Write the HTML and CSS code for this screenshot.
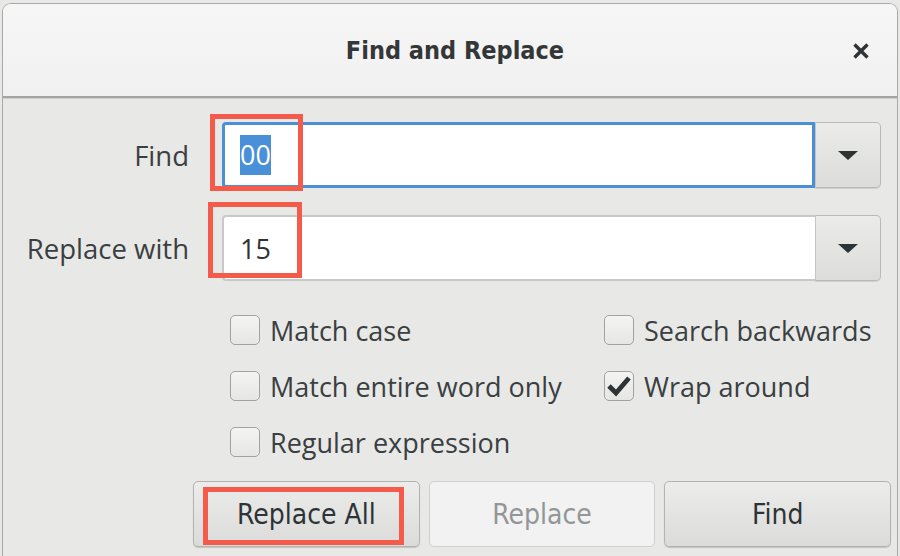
FILE: index.html
```html
<!DOCTYPE html>
<html>
<head>
<meta charset="utf-8">
<link rel="stylesheet" href="styles.css">
</head>
<body>
<div class="window">
  <header class="titlebar">
    <span class="title">Find and Replace</span>
    <button class="close" aria-label="Close">
      <svg width="18" height="16" viewBox="0 0 18 16"><path d="M2.5 1.5 L15.5 14.5 M15.5 1.5 L2.5 14.5" stroke="#2e3436" stroke-width="3.4" stroke-linecap="butt"/></svg>
    </button>
  </header>
  <main class="content">
    <div class="form">
      <label class="label">Find</label>
      <div class="combo">
        <div class="entry focused"><span class="sel">00</span></div>
        <div class="drop"><svg width="20" height="9" viewBox="0 0 20 9"><path d="M0 0 H20 L10 9 Z" fill="#2e3436"/></svg></div>
      </div>
      <label class="label">Replace with</label>
      <div class="combo">
        <div class="entry"><span class="val">15</span></div>
        <div class="drop"><svg width="20" height="9" viewBox="0 0 20 9"><path d="M0 0 H20 L10 9 Z" fill="#2e3436"/></svg></div>
      </div>
    </div>
    <div class="options">
      <div class="opt"><span class="box"></span><span>Match case</span></div>
      <div class="opt"><span class="box"></span><span>Search backwards</span></div>
      <div class="opt"><span class="box"></span><span>Match entire word only</span></div>
      <div class="opt"><span class="box checked"><svg width="26" height="24" viewBox="0 0 26 24"><path d="M3 12 L10 19 L23 4" fill="none" stroke="#2e3436" stroke-width="4.8"/></svg></span><span>Wrap around</span></div>
      <div class="opt"><span class="box"></span><span>Regular expression</span></div>
    </div>
    <div class="buttons">
      <button class="btn">Replace All</button>
      <button class="btn disabled">Replace</button>
      <button class="btn">Find</button>
    </div>
  </main>
</div>
<div class="mark mark-find"></div>
<div class="mark mark-replace"></div>
<div class="mark mark-all"></div>
</body>
</html>
```
FILE: styles.css
```css
html, body {
  margin: 0;
  padding: 0;
  background: #e8e8e7;
  width: 900px;
  height: 556px;
  overflow: hidden;
  font-family: "Open Sans", "Noto Sans", sans-serif;
  color: #2e3436;
}
body { position: relative; }

.window {
  margin: 3px 0 0 2px;
  width: 896px;
  height: 560px;
  border: 1px solid #a9a9a9;
  border-bottom: none;
  border-radius: 9px 9px 0 0;
  background: #e8e8e7;
  box-sizing: border-box;
  overflow: hidden;
}

.titlebar {
  height: 94px;
  background: linear-gradient(#f6f6f6, #f1f1f1);
  border-bottom: 2px solid #a5a5a5;
  box-shadow: 0 1px 0 #d0d0d0;
  display: flex;
  align-items: center;
  justify-content: center;
  position: relative;
  box-sizing: border-box;
}
.title {
  font-family: "DejaVu Sans", sans-serif;
  font-stretch: condensed;
  font-weight: bold;
  font-size: 25px;
  color: #333738;
  margin-left: 10px;
}
.close {
  position: absolute;
  right: 27px;
  top: 39px;
  background: none;
  border: none;
  padding: 0;
  width: 18px;
  height: 16px;
  display: flex;
}

.content {
  padding-top: 24px;
}

.form {
  display: grid;
  grid-template-columns: 186px 659px;
  column-gap: 33px;
  row-gap: 27px;
  align-items: center;
}
.label {
  text-align: right;
  font-size: 27.5px;
  color: #3a3f41;
}
.combo {
  display: flex;
  height: 66px;
}
.entry {
  flex: 1;
  background: #fff;
  border: 2px solid #c9c9c7;
  border-right: none;
  border-radius: 4px 0 0 4px;
  display: flex;
  align-items: center;
  padding-left: 16px;
  font-size: 27px;
  box-sizing: border-box;
}
.entry.focused {
  border: 3px solid #4a90d9;
  padding-left: 15px;
}
.sel {
  background: #4a90d9;
  color: #fff;
  padding: 2px 0;
  line-height: 36px;
}
.val { color: #2e3436; }
.drop {
  width: 66px;
  background: linear-gradient(#ebebea, #dcdcdb);
  border: 1px solid #b9b9b6;
  border-left: 1px solid #c4c4c2;
  border-radius: 0 5px 5px 0;
  box-shadow: 0 1px 0 #cfcfcd;
  box-sizing: border-box;
  display: flex;
  align-items: center;
  justify-content: center;
}

.options {
  display: grid;
  grid-template-columns: 374px auto;
  grid-auto-rows: 56px;
  margin: 21px 0 0 227px;
}
.opt {
  display: flex;
  align-items: center;
  font-size: 27px;
  color: #3a3f41;
}
.box {
  width: 30px;
  height: 30px;
  box-sizing: border-box;
  border: 1px solid #a2a2a0;
  border-radius: 5px;
  background: linear-gradient(#f4f4f3, #e6e6e5);
  margin-right: 10px;
  display: flex;
  align-items: center;
  justify-content: center;
  flex: none;
}

.buttons {
  display: flex;
  gap: 9px;
  margin: 11px 0 0 190px;
  width: 698px;
}
.btn {
  flex: 1;
  height: 66px;
  border: 1px solid #b3b3b0;
  border-radius: 5px;
  background: linear-gradient(#ececeb, #dbdbda);
  box-shadow: 0 1px 1px #c3c3c1;
  font-family: "DejaVu Sans", sans-serif;
  font-stretch: condensed;
  font-size: 28px;
  color: #2e3436;
  padding: 0;
}
.btn.disabled {
  background: #f2f2f2;
  border-color: #cfcfcd;
  box-shadow: none;
  color: #939697;
}

.mark {
  position: absolute;
  border: 5px solid #f45b4b;
  box-sizing: border-box;
}
.mark-find { left: 210px; top: 114px; width: 93px; height: 77px; }
.mark-replace { left: 208px; top: 202px; width: 94px; height: 76px; }
.mark-all { left: 203px; top: 487px; width: 201px; height: 58px; }
```
